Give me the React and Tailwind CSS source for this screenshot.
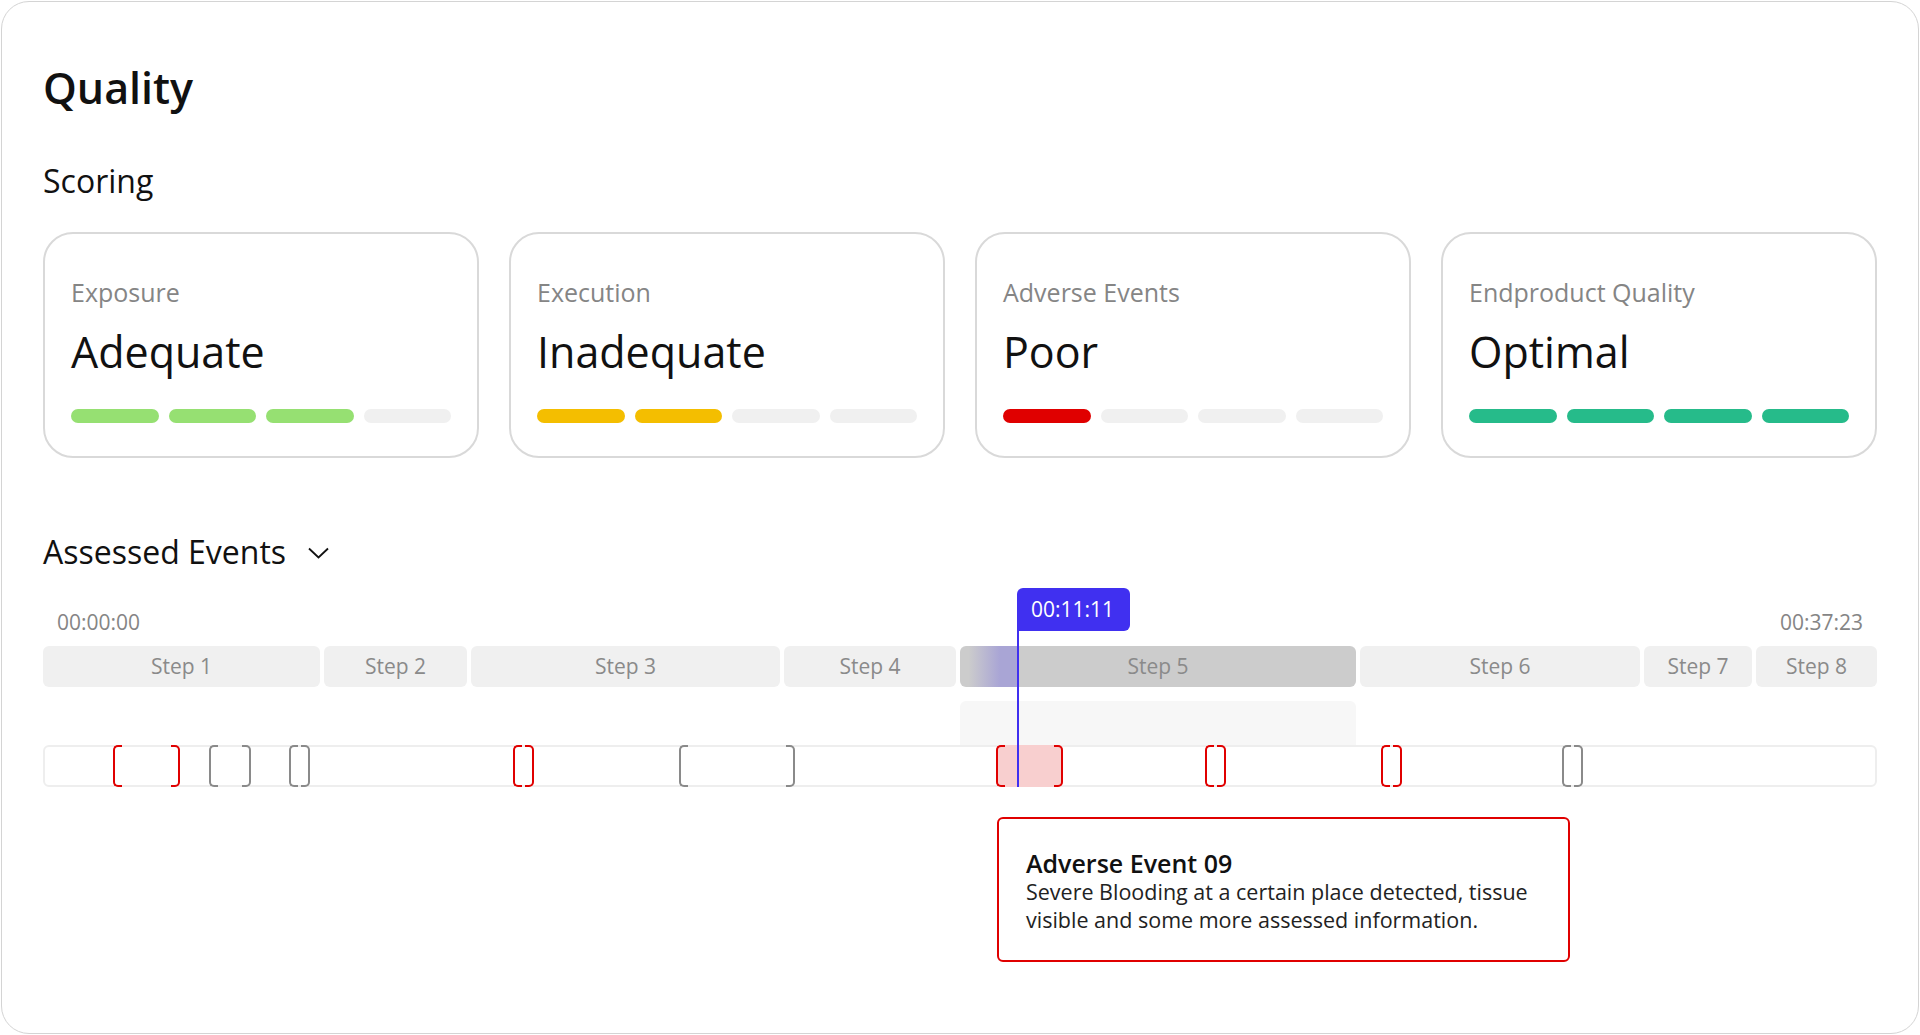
import React from "react";

const SCORES = [
  { label: "Exposure", value: "Adequate", filled: 3, color: "bg-[#96e072]" },
  { label: "Execution", value: "Inadequate", filled: 2, color: "bg-[#f4be00]" },
  { label: "Adverse Events", value: "Poor", filled: 1, color: "bg-[#e00000]" },
  { label: "Endproduct Quality", value: "Optimal", filled: 4, color: "bg-[#26bb8a]" },
];

const STEPS = [
  { name: "Step 1", w: "w-[277px]" },
  { name: "Step 2", w: "w-[143px]" },
  { name: "Step 3", w: "w-[309px]" },
  { name: "Step 4", w: "w-[172px]" },
  { name: "Step 5", w: "w-[396px]", active: true },
  { name: "Step 6", w: "w-[280px]" },
  { name: "Step 7", w: "w-[108px]" },
  { name: "Step 8", w: "flex-1" },
];

// x positions are relative to the inside of the event row (page x 45)
const EVENTS = [
  { x: 68, w: 67, red: true },
  { x: 164, w: 42 },
  { x: 244, w: 21 },
  { x: 468, w: 21, red: true },
  { x: 634, w: 116 },
  { x: 951, w: 67, red: true, selected: true },
  { x: 1160, w: 21, red: true },
  { x: 1336, w: 21, red: true },
  { x: 1517, w: 21 },
];

function ScoreCard({ label, value, filled, color }) {
  return (
    <div className="flex-1 h-[226px] rounded-[30px] border-2 border-[#d9d9d9] px-[26px] pt-[42px]">
      <div className="text-[25px] leading-[32px] text-[#858585]">{label}</div>
      <div className="mt-[19px] text-[43px] leading-[50px] text-[#111]">{value}</div>
      <div className="mt-[32px] flex gap-[10px]">
        {[0, 1, 2, 3].map((i) => (
          <div
            key={i}
            className={`h-[14px] flex-1 rounded-full ${i < filled ? color : "bg-[#f0f0f0]"}`}
          />
        ))}
      </div>
    </div>
  );
}

function Bracket({ x, w, red, selected }) {
  const stub = Math.min(9, Math.floor(w / 2) - 1);
  const border = red ? "border-[#e00000]" : "border-[#8a8a8a]";
  return (
    <div className="absolute top-[-2px] h-[42px]" style={{ left: x, width: w }}>
      {selected && <div className="absolute inset-0 rounded-[5px] bg-[#f8cfcf]" />}
      <div
        className={`absolute left-0 top-0 h-full border-2 border-r-0 rounded-l-[5px] ${border}`}
        style={{ width: stub }}
      />
      <div
        className={`absolute right-0 top-0 h-full border-2 border-l-0 rounded-r-[5px] ${border}`}
        style={{ width: stub }}
      />
    </div>
  );
}

export default function App() {
  return (
    <div className="p-px bg-white font-['Open_Sans',sans-serif]">
      <div className="h-[1033px] rounded-[28px] border border-[#d4d4d4] bg-white px-[41px] pt-[61px]">
        <h1 className="text-[43px] leading-[50px] font-semibold text-[#111]">Quality</h1>

        <h2 className="mt-[48px] text-[32px] leading-[40px] text-[#111]">Scoring</h2>
        <div className="mt-[31px] flex gap-[30px]">
          {SCORES.map((s) => (
            <ScoreCard key={s.label} {...s} />
          ))}
        </div>

        <div className="mt-[74px] flex items-center gap-[22px]">
          <h2 className="text-[32px] leading-[40px] text-[#111]">Assessed Events</h2>
          <svg width="21" height="12" viewBox="0 0 21 12" fill="none" className="mt-[2px]">
            <path d="M1 1.5 L10.5 10.5 L20 1.5" stroke="#111" strokeWidth="1.8" />
          </svg>
        </div>

        <div className="relative mt-[36px]">
          <div className="flex justify-between px-[14px] text-[21px] leading-[28px] text-[#858585]">
            <span>00:00:00</span>
            <span>00:37:23</span>
          </div>

          <div className="mt-[10px] flex gap-[4px]">
            {STEPS.map((s) => (
              <div
                key={s.name}
                className={`relative h-[41px] ${s.w} overflow-hidden rounded-[6px] flex items-center justify-center text-[21px] text-[#8a8a8a] ${
                  s.active ? "bg-[#cccccc]" : "bg-[#f0f0f0]"
                }`}
              >
                {s.active && (
                  <div className="absolute left-0 top-0 h-full w-[57px] bg-gradient-to-r from-transparent from-[15%] to-[#4030f0]/25 to-[70%]" />
                )}
                <span className="relative">{s.name}</span>
              </div>
            ))}
          </div>

          <div className="mt-[14px] ml-[917px] h-[44px] w-[396px] rounded-t-[6px] bg-[#f7f7f7]" />

          <div className="relative h-[42px] rounded-[6px] border-2 border-[#eeeeee]">
            {EVENTS.map((e, i) => (
              <Bracket key={i} {...e} />
            ))}
          </div>

          {/* playhead */}
          <div className="absolute left-[974px] top-[-20px] flex flex-col">
            <div className="h-[43px] rounded-[6px] rounded-bl-none bg-[#4030f0] pl-[14px] pr-[16px] text-[21px] leading-[43px] text-white">
              00:11:11
            </div>
            <div className="h-[156px] w-[2px] bg-[#4030f0]" />
          </div>

          {/* event details */}
          <div className="absolute left-[954px] top-[209px] w-[573px] rounded-[6px] border-2 border-[#e00000] bg-white px-[27px] pt-[29px] pb-[26px]">
            <div className="text-[25px] leading-[30px] font-semibold text-[#111]">Adverse Event 09</div>
            <div className="text-[21.5px] leading-[28px] text-[#222]">
              Severe Blooding at a certain place detected, tissue visible and some more assessed
              information.
            </div>
          </div>
        </div>
      </div>
    </div>
  );
}
